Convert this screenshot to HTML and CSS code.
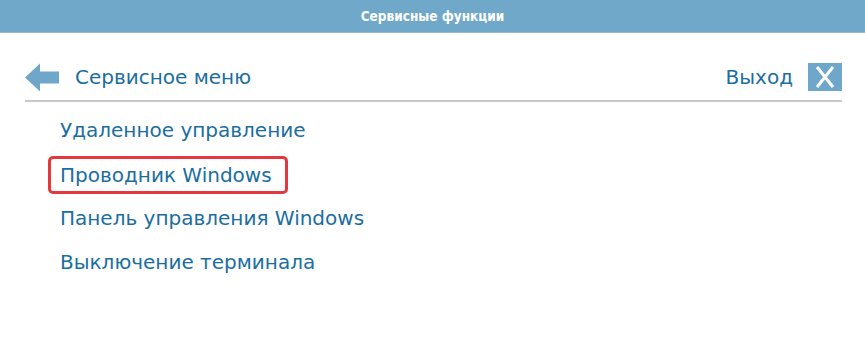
FILE: index.html
```html
<!DOCTYPE html>
<html>
<head>
  <title>Сервисные функции</title>
  <link rel="stylesheet" href="styles.css">
</head>
<body>
  <div class="header">Сервисные функции</div>

  <div class="toolbar">
    <div class="back">
      <svg class="back-icon" width="34" height="29" viewBox="0 0 34 29">
        <polygon points="0,14.5 15,0.5 15,8.5 34,8.5 34,20.5 15,20.5 15,28.5" fill="#6fa7cb"/>
      </svg>
      <span class="toolbar-title">Сервисное меню</span>
    </div>
    <div class="exit">
      <span class="exit-label">Выход</span>
      <span class="exit-button">
        <svg width="20" height="22" viewBox="0 0 20 22">
          <path d="M2 1 L18 21 M18 1 L2 21" stroke="#fff" stroke-width="3"/>
        </svg>
      </span>
    </div>
  </div>

  <div class="menu">
    <div class="menu-item">Удаленное управление</div>
    <div class="menu-item selected">Проводник Windows</div>
    <div class="menu-item">Панель управления Windows</div>
    <div class="menu-item">Выключение терминала</div>
  </div>
</body>
</html>
```

FILE: styles.css
```css
body {
  margin: 0;
  padding: 0;
  background-color: #ffffff;
  font-family: "DejaVu Sans", sans-serif;
  color: #1b6ea0;
}

.header {
  height: 32px;
  line-height: 32px;
  background-color: #70a8c9;
  border-bottom: 1px solid #8fbad2;
  color: #ffffff;
  font-family: "DejaVu Sans Condensed", "DejaVu Sans", sans-serif;
  font-size: 13.5px;
  font-weight: bold;
  text-align: center;
}

.toolbar {
  display: flex;
  align-items: center;
  justify-content: space-between;
  height: 46px;
  padding-top: 21px;
  margin: 0 23px 0 25px;
  border-bottom: 2px solid #c8c8c8;
}

.back {
  display: flex;
  align-items: center;
}

.back-icon {
  display: block;
}

.toolbar-title {
  font-size: 20px;
  margin-left: 16px;
}

.exit {
  display: flex;
  align-items: center;
}

.exit-label {
  font-size: 20px;
}

.exit-button {
  display: flex;
  align-items: center;
  justify-content: center;
  width: 34px;
  height: 28px;
  margin-left: 15px;
  background-color: #6fa7cb;
}

.menu {
  padding: 6px 0 0 60px;
}

.menu-item {
  font-size: 20px;
  line-height: 44px;
}

.menu-item.selected {
  display: inline-block;
  line-height: 32px;
  margin: 4px 0 2px -12px;
  padding: 0 13px 0 9px;
  border: 3px solid #e5383e;
  border-radius: 5px;
}
```
